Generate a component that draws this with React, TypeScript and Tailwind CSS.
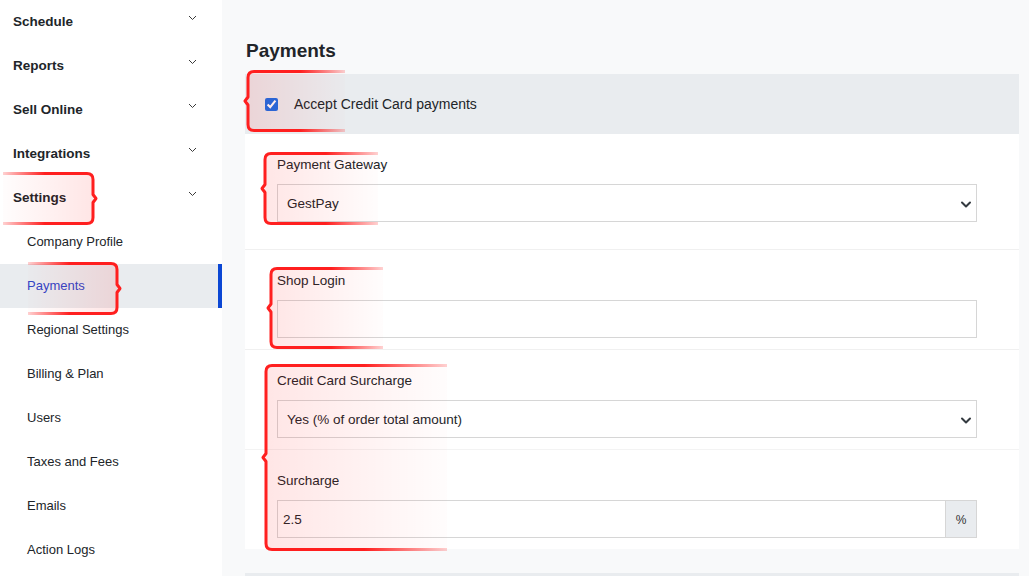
import React, { useId } from 'react';

type BracketProps = { w: number; h: number; side: 'left' | 'right'; className: string };

// red curly-brace markers drawn over the page
const Bracket = ({ w, h, side, className }: BracketProps) => {
  const id = useId().replace(/[^a-zA-Z0-9]/g, '');
  const x0 = 5;
  const r = 6;
  const mid = h / 2;
  const d = `M ${w} 1.5 H ${x0 + r} Q ${x0} 1.5 ${x0} ${1.5 + r} V ${mid - 4} L ${x0 - 3} ${mid} L ${x0} ${mid + 4} V ${h - 1.5 - r} Q ${x0} ${h - 1.5} ${x0 + r} ${h - 1.5} H ${w}`;
  return (
    <svg className={`pointer-events-none absolute ${className}`} width={w} height={h} viewBox={`0 0 ${w} ${h}`}>
      <defs>
        <linearGradient id={`f${id}`} x1="0" x2="1" y1="0" y2="0">
          <stop offset="0" stopColor="#ff0000" stopOpacity="0.1" />
          <stop offset="1" stopColor="#ff0000" stopOpacity="0.01" />
        </linearGradient>
        <linearGradient id={`s${id}`} x1="0" x2="1" y1="0" y2="0">
          <stop offset="0" stopColor="#ff1f1f" stopOpacity="1" />
          <stop offset="0.55" stopColor="#ff1f1f" stopOpacity="1" />
          <stop offset="1" stopColor="#ff1f1f" stopOpacity="0.2" />
        </linearGradient>
      </defs>
      <g transform={side === 'right' ? `translate(${w} 0) scale(-1 1)` : undefined}>
        <rect x={x0} y={1.5} width={w - x0} height={h - 3} fill={`url(#f${id})`} />
        <path d={d} fill="none" stroke={`url(#s${id})`} strokeWidth={3} strokeLinejoin="round" />
      </g>
    </svg>
  );
};

const SmallChevron = () => (
  <svg width="9" height="6" viewBox="0 0 9 6" className="-translate-y-1">
    <polyline points="1,1 4.5,4.5 8,1" fill="none" stroke="#3a3a3a" strokeWidth="1" />
  </svg>
);

const SelectChevron = () => (
  <svg width="12" height="9" viewBox="0 0 12 9">
    <polyline points="2,2.5 6,6.5 10,2.5" fill="none" stroke="#343a40" strokeWidth="2" strokeLinecap="round" strokeLinejoin="round" />
  </svg>
);

const topItems = ['Schedule', 'Reports', 'Sell Online', 'Integrations', 'Settings'];
const subItems = ['Company Profile', 'Payments', 'Regional Settings', 'Billing & Plan', 'Users', 'Taxes and Fees', 'Emails', 'Action Logs'];

const Sidebar = () => (
  <aside className="w-[222px] shrink-0 bg-white">
    {topItems.map((t) => (
      <div key={t} className="flex h-[44px] items-center justify-between pl-[13px] pr-[25px] text-[13.5px] font-bold text-[#212529]">
        <span>{t}</span>
        <SmallChevron />
      </div>
    ))}
    {subItems.map((t) =>
      t === 'Payments' ? (
        <div key={t} className="flex h-[44px] items-center border-r-4 border-[#0b47d4] bg-[#e9ecef] pl-[27px] text-[13px] text-[#3146c8]">
          {t}
        </div>
      ) : (
        <div key={t} className="flex h-[44px] items-center pl-[27px] text-[13px] text-[#212529]">
          {t}
        </div>
      )
    )}
  </aside>
);

const Label = ({ children }: { children: React.ReactNode }) => (
  <div className="mb-[9px] h-[20px] text-[13.5px] leading-[20px] text-[#212529]">{children}</div>
);

const SelectBox = ({ value }: { value: string }) => (
  <div className="flex h-[38px] items-center justify-between border border-[#d6d6d6] bg-white pl-[9px] pr-[4px] pt-[2px] text-[13.5px] text-[#212529]">
    <span>{value}</span>
    <SelectChevron />
  </div>
);

export default function App() {
  return (
    <div className="relative flex h-[576px] w-full overflow-hidden bg-[#f8f9fa] font-['Liberation_Sans',Arial,sans-serif]">
      <Sidebar />
      <main className="flex-1 pl-[23px] pr-[10px] pt-[38px]">
        <h1 className="mb-[10px] h-[26px] pl-px text-[19px] font-bold leading-[26px] text-[#212529]">Payments</h1>
        <div className="flex h-[60px] items-center gap-4 bg-[#e9ecef] pl-5 text-[14px] text-[#212529]">
          <input type="checkbox" defaultChecked className="h-[13px] w-[13px] accent-[#1a6de6]" />
          <span>Accept Credit Card payments</span>
        </div>
        <div className="bg-white">
          <div className="border-b border-[#f0f0f0] pb-[27px] pl-8 pr-[42px] pt-[21px]">
            <Label>Payment Gateway</Label>
            <SelectBox value="GestPay" />
          </div>
          <div className="border-b border-[#f0f0f0] pb-[11px] pl-8 pr-[42px] pt-[21px]">
            <Label>Shop Login</Label>
            <div className="h-[38px] border border-[#d6d6d6] bg-white" />
          </div>
          <div className="border-b border-[#f3f3f3] pb-[11px] pl-8 pr-[42px] pt-[21px]">
            <Label>Credit Card Surcharge</Label>
            <SelectBox value="Yes (% of order total amount)" />
          </div>
          <div className="pb-[11px] pl-8 pr-[42px] pt-[21px]">
            <Label>Surcharge</Label>
            <div className="flex h-[38px] border border-[#d6d6d6] bg-white text-[13.5px] text-[#212529]">
              <div className="flex flex-1 items-center pl-[5px] pt-[2px]">2.5</div>
              <div className="flex w-[31px] items-center justify-center border-l border-[#d6d6d6] bg-[#e9ecef] pt-[2px] text-[12px] font-light text-[#333]">%</div>
            </div>
          </div>
        </div>
        <div className="mt-[24px] h-[40px] bg-[#e9ecef]" />
      </main>

      <Bracket side="right" w={95} h={53} className="left-[3px] top-[172px]" />
      <Bracket side="right" w={94} h={53} className="left-[28px] top-[262px]" />
      <Bracket side="left" w={102} h={62} className="left-[243px] top-[70px]" />
      <Bracket side="left" w={118} h={73} className="left-[260px] top-[152px]" />
      <Bracket side="left" w={117} h={82} className="left-[266px] top-[267px]" />
      <Bracket side="left" w={186} h={187} className="left-[261px] top-[364px]" />
    </div>
  );
}
